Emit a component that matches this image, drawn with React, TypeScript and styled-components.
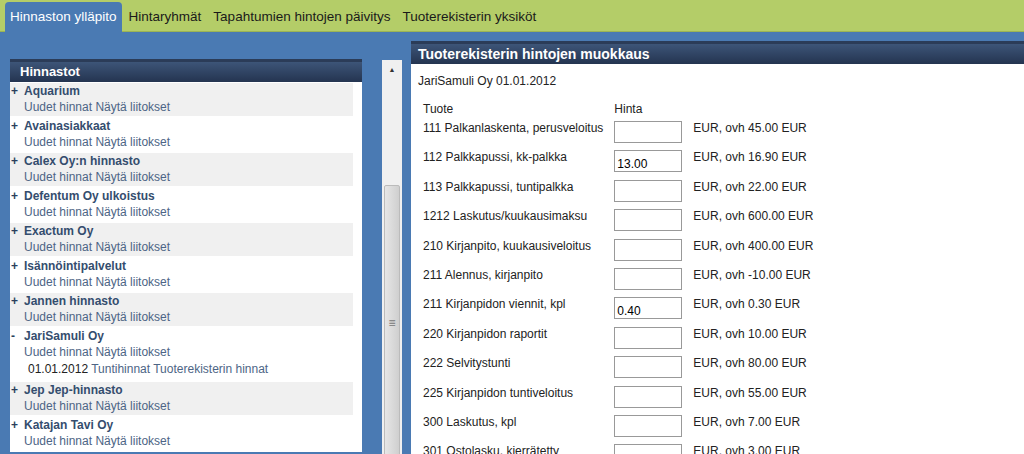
import React from 'react'
import styled, { createGlobalStyle } from 'styled-components'

const GlobalStyle = createGlobalStyle`
    html, body { margin: 0; padding: 0; }
    body {
        font-family: 'Liberation Sans', Arial, sans-serif;
        font-size: 12px;
        background: #4a7ab3;
    }
`

const tabs = ['Hinnaston ylläpito', 'Hintaryhmät', 'Tapahtumien hintojen päivitys', 'Tuoterekisterin yksiköt']

const lists = [
    'Aquarium',
    'Avainasiakkaat',
    'Calex Oy:n hinnasto',
    'Defentum Oy ulkoistus',
    'Exactum Oy',
    'Isännöintipalvelut',
    'Jannen hinnasto',
    'JariSamuli Oy',
    'Jep Jep-hinnasto',
    'Katajan Tavi Oy',
]

const prices: [string, string, string][] = [
    ['111 Palkanlaskenta, perusveloitus', '', '45.00'],
    ['112 Palkkapussi, kk-palkka', '13.00', '16.90'],
    ['113 Palkkapussi, tuntipalkka', '', '22.00'],
    ['1212 Laskutus/kuukausimaksu', '', '600.00'],
    ['210 Kirjanpito, kuukausiveloitus', '', '400.00'],
    ['211 Alennus, kirjanpito', '', '-10.00'],
    ['211 Kirjanpidon viennit, kpl', '0.40', '0.30'],
    ['220 Kirjanpidon raportit', '', '10.00'],
    ['222 Selvitystunti', '', '80.00'],
    ['225 Kirjanpidon tuntiveloitus', '', '55.00'],
    ['300 Laskutus, kpl', '', '7.00'],
    ['301 Ostolasku, kierrätetty', '', '3.00'],
]

const App: React.FC = () => {
    return (
        <Page>
            <GlobalStyle />
            <TabBar>
                {tabs.map((t, i) => (
                    <Tab key={t} active={i === 0}>
                        {t}
                    </Tab>
                ))}
            </TabBar>
            <Main>
                <LeftPanel>
                    <PanelHeader>Hinnastot</PanelHeader>
                    <ListBody>
                        {lists.map((name, i) => (
                            <ListItem key={name} shaded={i % 2 === 0}>
                                <ItemTitle>
                                    <Toggle>{name === 'JariSamuli Oy' ? '-' : '+'}</Toggle>
                                    {name}
                                </ItemTitle>
                                <ItemLinks>Uudet hinnat Näytä liitokset</ItemLinks>
                                {name === 'JariSamuli Oy' && (
                                    <SubLine>
                                        <b>01.01.2012</b> Tuntihinnat Tuoterekisterin hinnat
                                    </SubLine>
                                )}
                            </ListItem>
                        ))}
                    </ListBody>
                </LeftPanel>
                <ScrollBar>
                    <Arrow>▲</Arrow>
                    <Thumb>≡</Thumb>
                </ScrollBar>
                <RightPanel>
                    <RightHeader>Tuoterekisterin hintojen muokkaus</RightHeader>
                    <RightBody>
                        <Caption>JariSamuli Oy 01.01.2012</Caption>
                        <PriceTable>
                            <thead>
                                <tr>
                                    <Th>Tuote</Th>
                                    <Th>Hinta</Th>
                                    <Th />
                                </tr>
                            </thead>
                            <tbody>
                                {prices.map(([name, val, ovh]) => (
                                    <tr key={name}>
                                        <Td>{name}</Td>
                                        <Td>
                                            <PriceInput defaultValue={val} />
                                        </Td>
                                        <Td>EUR, ovh {ovh} EUR</Td>
                                    </tr>
                                ))}
                            </tbody>
                        </PriceTable>
                    </RightBody>
                </RightPanel>
            </Main>
        </Page>
    )
}

export default App

const Page = styled.div`
    height: 454px;
    overflow: hidden;
`

const TabBar = styled.div`
    display: flex;
    align-items: flex-end;
    gap: 2px;
    height: 31px;
    padding-left: 5px;
    background: #b4cd68;
    border-bottom: 1px solid #9cb455;
`

const Tab = styled.div<{ active: boolean }>`
    padding: 0 5px;
    height: ${({ active }) => (active ? '30px' : '28px')};
    line-height: ${({ active }) => (active ? '30px' : '28px')};
    font-size: 13.5px;
    color: ${({ active }) => (active ? '#fff' : '#1a1a1a')};
    background: ${({ active }) => (active ? '#4a7ab3' : 'transparent')};
    border-radius: ${({ active }) => (active ? '4px 4px 0 0' : '0')};
    ${({ active }) => active && 'margin-bottom: -1px;'}
`

const Main = styled.div`
    display: flex;
    align-items: flex-start;
    padding-left: 10px;
`

const LeftPanel = styled.div`
    width: 352px;
    margin-top: 27px;
    background: #fff;
`

const PanelHeader = styled.div`
    height: 20px;
    line-height: 19px;
    padding-left: 10px;
    color: #fff;
    font-weight: bold;
    font-size: 13px;
    background: linear-gradient(#3d5578, #243450);
    border-top: 3px solid #2b3c58;
`

const ListBody = styled.div`
    padding: 1px 0 0;
`

const ListItem = styled.div<{ shaded: boolean }>`
    width: 342px;
    padding: 1px 0 1px 1px;
    margin-bottom: 2px;
    background: ${({ shaded }) => (shaded ? '#f0f0f0' : '#fff')};
`

const ItemTitle = styled.div`
    display: flex;
    font-weight: bold;
    color: #344d6e;
    line-height: 15px;
`

const Toggle = styled.span`
    width: 13px;
    color: #2a3f5c;
`

const ItemLinks = styled.div`
    padding-left: 13px;
    color: #4d6585;
    line-height: 16px;
`

const SubLine = styled.div`
    padding: 2px 0 2px 17px;
    color: #4d6585;
    line-height: 15px;

    b {
        font-weight: normal;
        color: #222;
    }
`

const ScrollBar = styled.div`
    display: flex;
    flex-direction: column;
    align-items: center;
    width: 20px;
    height: 400px;
    margin: 28px 0 0 20px;
    background: #f0f0f0;
`

const Arrow = styled.div`
    font-size: 7px;
    color: #333;
    padding-top: 6px;
`

const Thumb = styled.div`
    width: 16px;
    height: 300px;
    margin-top: 112px;
    display: flex;
    align-items: center;
    justify-content: center;
    color: #777;
    background: linear-gradient(90deg, #e6e6e6, #cfcfcf);
    border: 1px solid #bbb;
    border-radius: 2px;
    box-sizing: border-box;
`

const RightPanel = styled.div`
    flex: 1;
    margin: 9px 0 0 9px;
    background: #fff;
    height: 420px;
`

const RightHeader = styled.div`
    height: 20px;
    line-height: 20px;
    padding-left: 7px;
    color: #fff;
    font-weight: bold;
    font-size: 14px;
    background: linear-gradient(#3d5578, #243450);
    border-top: 3px solid #2b3c58;
`

const RightBody = styled.div`
    padding: 10px 7px;
    color: #222;
`

const Caption = styled.div`
    margin-bottom: 14px;
`

const PriceTable = styled.table`
    border-collapse: collapse;
`

const Th = styled.th`
    text-align: left;
    font-weight: normal;
    padding: 0 6px 4px 5px;
    height: 14px;
`

const Td = styled.td`
    padding: 1px 6px 0 5px;
    height: 28.4px;
    vertical-align: top;
    line-height: 14px;
`

const PriceInput = styled.input`
    width: 68px;
    height: 22px;
    box-sizing: border-box;
    border: 1px solid #999;
    font: 12px 'Liberation Sans', Arial, sans-serif;
    padding: 5px 2px 0;
`
